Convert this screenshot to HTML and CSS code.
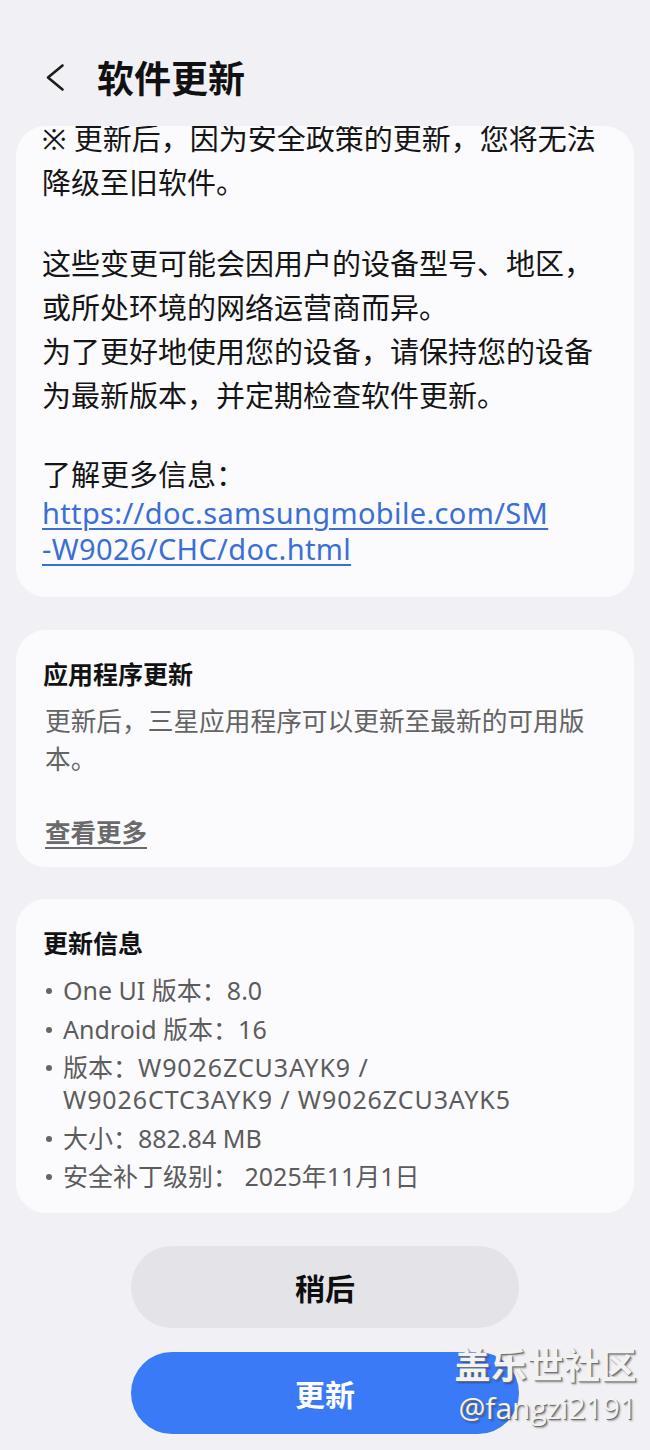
FILE: index.html
```html
<!DOCTYPE html>
<html lang="zh-CN">
<head>
<meta charset="utf-8">
<title>软件更新</title>
<link rel="stylesheet" href="styles.css">
</head>
<body>
<div class="screen">
  <header class="topbar">
    <button class="back" aria-label="返回">
      <svg viewBox="0 0 20 31" width="20" height="31"><path d="M17.5 3.5 L3 15.5 L17.5 27.5" fill="none" stroke="#1c1c1c" stroke-width="2.6" stroke-linecap="round" stroke-linejoin="round"/></svg>
    </button>
    <h1 class="title">软件更新</h1>
  </header>

  <main class="list">
    <section class="card card-notes">
      <p class="para">※ 更新后，因为安全政策的更新，您将无法降级至旧软件。</p>
      <p class="para para-gap">这些变更可能会因用户的设备型号、地区，或所处环境的网络运营商而异。<br>为了更好地使用您的设备，请保持您的设备为最新版本，并定期检查软件更新。</p>
      <p class="para para-gap more-label">了解更多信息：</p>
      <a class="doc-link" href="#">https://doc.samsungmobile.com/SM<br>-W9026/CHC/doc.html</a>
    </section>

    <section class="card card-apps">
      <h2 class="card-title">应用程序更新</h2>
      <p class="card-body">更新后，三星应用程序可以更新至最新的可用版本。</p>
      <a class="see-more" href="#">查看更多</a>
    </section>

    <section class="card card-info">
      <h2 class="card-title">更新信息</h2>
      <ul class="info-list">
        <li><span class="dot"></span><span>One UI 版本：8.0</span></li>
        <li><span class="dot"></span><span>Android 版本：16</span></li>
        <li><span class="dot"></span><span>版本：<span class="code">W9026ZCU3AYK9 /</span><br><span class="code">W9026CTC3AYK9 / W9026ZCU3AYK5</span></span></li>
        <li><span class="dot"></span><span>大小：882.84 MB</span></li>
        <li><span class="dot"></span><span>安全补丁级别： 2025年11月1日</span></li>
      </ul>
    </section>
  </main>

  <div class="actions">
    <button class="btn btn-later">稍后</button>
    <button class="btn btn-update">更新</button>
  </div>

  <div class="watermark">
    <div class="wm-title">盖乐世社区</div>
    <div class="wm-user">@fangzi2191</div>
  </div>
</div>
</body>
</html>
```
FILE: styles.css
```css
* { box-sizing: border-box; }

html, body {
  margin: 0;
  padding: 0;
}

body {
  width: 650px;
  height: 1450px;
  overflow: hidden;
  background: #f1f1f5;
  font-family: "Noto Sans", "Noto Sans CJK SC", sans-serif;
  color: #141414;
}

.screen {
  position: relative;
  width: 650px;
  height: 1450px;
}

/* header */
.topbar {
  display: flex;
  align-items: center;
  height: 126px;
  padding: 57px 0 29px 45px;
}

.back {
  display: flex;
  width: 20px;
  height: 31px;
  padding: 0;
  border: 0;
  background: none;
}

.title {
  margin: 0 0 0 32px;
  font-family: "Noto Sans CJK SC", sans-serif;
  font-size: 37px;
  line-height: 40px;
  font-weight: 700;
  color: #111;
}

/* scrolling list */
.list {
  display: flex;
  flex-direction: column;
  gap: 32px;
  margin: 0 16px;
  border-radius: 30px 30px 0 0;
  overflow: hidden;
}

.card {
  background: #fbfbfe;
  border-radius: 30px;
}

.card-notes {
  margin-top: -33px;
  margin-bottom: 1px;
  padding: 24px 20px 30px 26px;
  font-size: 29px;
  line-height: 44px;
  color: #151515;
}

.para { margin: 0; }
.para-gap { margin-top: 37px; }
.more-label { line-height: 40px; }

.doc-link {
  display: block;
  font-size: 29px;
  line-height: 36px;
  letter-spacing: 0.35px;
  color: #3a6fd6;
  text-decoration: underline;
  text-decoration-thickness: 2px;
  text-underline-offset: 4px;
}

.card-apps {
  display: flex;
  flex-direction: column;
  align-items: flex-start;
  padding: 26px 32px 16px 27px;
}

.card-title {
  margin: 0;
  font-family: "Noto Sans CJK SC", sans-serif;
  font-size: 25px;
  line-height: 34px;
  font-weight: 700;
  color: #121212;
}

.card-body {
  margin: 13px 0 0 2px;
  font-size: 25.7px;
  line-height: 38px;
  color: #646464;
}

.see-more {
  margin: 34px 0 0 2px;
  font-size: 25.5px;
  line-height: 38px;
  font-weight: 700;
  color: #6a6a6a;
  text-decoration: underline;
  text-decoration-thickness: 2px;
  text-underline-offset: 5px;
}

.card-info {
  padding: 26px 26px 21px 27px;
}

.info-list {
  display: flex;
  flex-direction: column;
  gap: 6.5px;
  margin: 15px 0 0;
  padding: 0;
  list-style: none;
  font-size: 25px;
  line-height: 32px;
  color: #5c5c5c;
}

.info-list li {
  display: grid;
  grid-template-columns: 20px 1fr;
}

.code {
  letter-spacing: 0.9px;
}

.dot {
  width: 6px;
  height: 6px;
  margin: 14px 0 0 3px;
  border-radius: 50%;
  background: #666;
}

/* bottom actions */
.actions {
  display: flex;
  flex-direction: column;
  align-items: center;
  gap: 24px;
  margin-top: 33px;
}

.btn {
  width: 388px;
  height: 82px;
  border: 0;
  border-radius: 41px;
  font-family: "Noto Sans CJK SC", sans-serif;
  font-size: 30px;
  font-weight: 700;
}

.btn-later {
  background: #e4e4e8;
  color: #0e0e0e;
}

.btn-update {
  background: #3a7af6;
  color: #fff;
}

/* watermark overlay */
.watermark {
  position: absolute;
  right: 13px;
  top: 1338px;
  text-align: right;
  color: #f2f2f2;
  text-shadow: 1px 1px 0 #6f6f6f, 2px 2px 2px rgba(0, 0, 0, 0.35);
}

.wm-title {
  font-family: "Noto Sans CJK SC", sans-serif;
  font-size: 36px;
  line-height: 50px;
  font-weight: 700;
  letter-spacing: 0.5px;
}

.wm-user {
  font-family: "Open Sans", sans-serif;
  font-size: 30px;
  line-height: 40px;
}
```
